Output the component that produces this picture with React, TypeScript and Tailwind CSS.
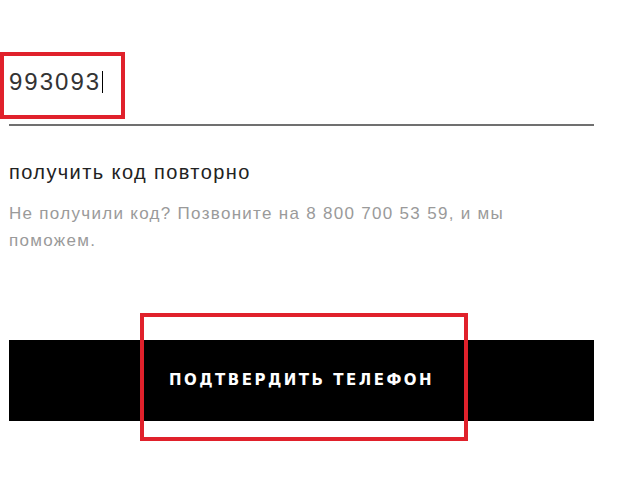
import React from 'react';

export default function App() {
  return (
    <div className="relative w-[624px] h-[485px] bg-white overflow-hidden font-['Liberation_Sans',Arial,sans-serif]">
      <div className="w-[585px] ml-[9px] pt-[68px]">
        {/* Code input */}
        <div className="flex items-start h-[58px] border-b-2 border-[#707070]">
          <span className="text-[24px] leading-[27px] tracking-[2px] text-[#333]">993093</span>
          <span className="w-px h-[22px] mt-[3px] bg-black ml-[1px]" />
        </div>

        <p className="mt-[34px] text-[20px] leading-[24px] tracking-[1.4px] text-[#222]">получить код повторно</p>
        <p className="mt-[16px] w-[530px] text-[17px] leading-[27px] tracking-[1.3px] text-[#9a9a9a]">
          Не получили код? Позвоните на 8 800 700 53 59, и мы поможем.
        </p>

        <button className="mt-[86px] w-full h-[81px] bg-black text-white font-['DejaVu_Sans',sans-serif] font-bold text-[15px] tracking-[2.5px] uppercase">
          Подтвердить телефон
        </button>
      </div>

      {/* annotation boxes */}
      <div className="absolute left-0 top-[52px] w-[125px] h-[67px] border-[4px] border-[#e0212b]" />
      <div className="absolute left-[140px] top-[313px] w-[328px] h-[128px] border-[4px] border-[#e0212b]" />
    </div>
  );
}
